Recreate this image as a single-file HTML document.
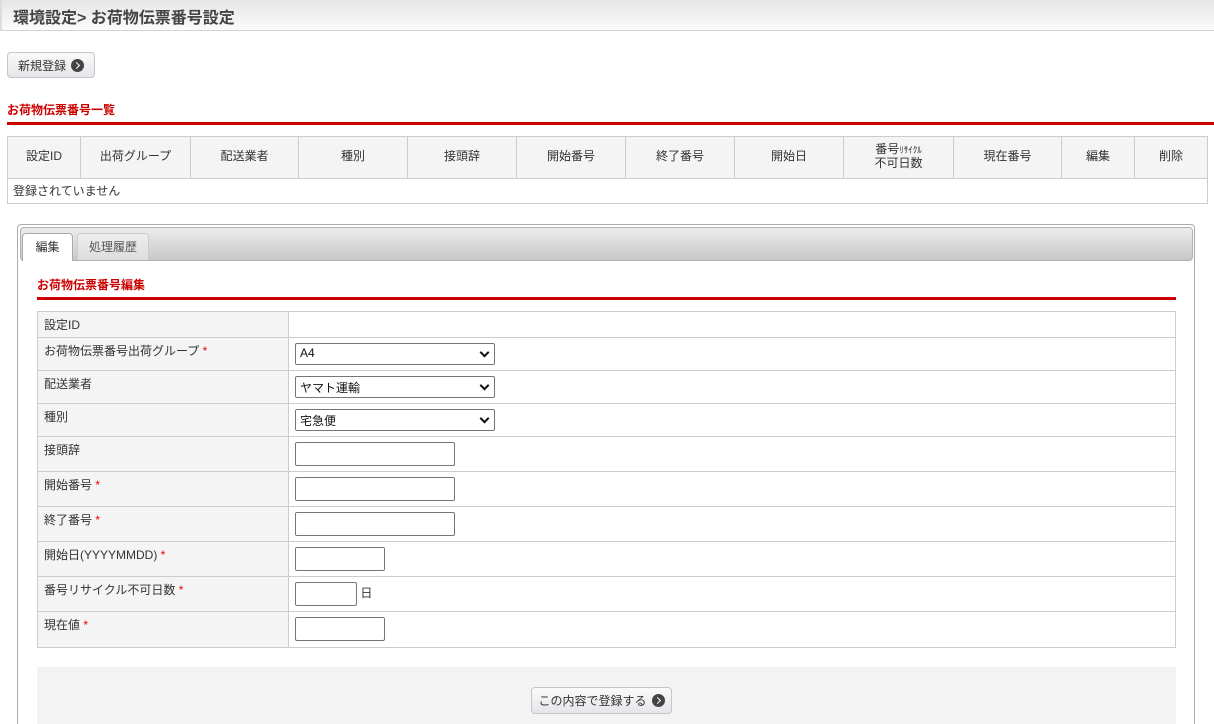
<!DOCTYPE html>
<html style="overflow:hidden;height:724px"><head><meta charset="utf-8">
<style>
*{box-sizing:border-box;margin:0;padding:0}
body{width:1214px;height:724px;overflow:hidden;background:#fff;font-family:"Liberation Sans","Noto Sans CJK JP",sans-serif;font-size:12px;color:#333;position:relative}
.a{position:absolute}
.hdr{left:0;top:0;width:1214px;height:31px;background:linear-gradient(#e6e6e6,#fbfbfb);border-bottom:1px solid #d4d0dc;border-left:2px solid #ddd}
.hdr span{position:absolute;left:11px;top:4px;font-size:16px;font-weight:bold;color:#444}
.btn{border:1px solid #c4c4cc;border-radius:4px;background:linear-gradient(#fafafa,#e6e6ea);font-size:12px;color:#333;display:flex;align-items:center;justify-content:center;gap:5px}
.ic{width:13px;height:13px;border-radius:50%;background:#444;display:inline-block;position:relative}
.ic:after{content:"";position:absolute;left:3px;top:4px;width:4px;height:4px;border-top:1.5px solid #fff;border-right:1.5px solid #fff;transform:rotate(45deg)}
.h2{color:#c00;font-weight:bold;font-size:12px}
.rl{height:3px;background:#c00}
table{border-collapse:collapse;position:absolute}
td,th{border:1px solid #ccc;font-weight:normal}
.lt th{background:#f3f4f3;text-align:center;font-size:12px;line-height:13px;padding-bottom:2px}
.ft td{vertical-align:top;padding:4px 6px 0}
.ft td.l{background:#f3f4f3;width:251px}
.r{color:#e00}
.sel{width:200px;height:22px;border:1px solid #767676;border-radius:2px;background:#fff;position:relative;padding:2px 4px;font-size:12px;color:#111}
.sel:after{content:"";position:absolute;right:6px;top:5px;width:5px;height:5px;border-right:2px solid #111;border-bottom:2px solid #111;transform:rotate(45deg)}
.in{height:24px;border:1px solid #767676;border-radius:2px;background:#fff;display:inline-block;vertical-align:middle}
</style></head><body>
<div class="a hdr"><span>環境設定&gt; お荷物伝票番号設定</span></div>
<div class="a btn" style="left:7px;top:52px;width:88px;height:26px">新規登録<i class="ic"></i></div>
<div class="a h2" style="left:7px;top:101px">お荷物伝票番号一覧</div>
<div class="a rl" style="left:7px;top:122px;width:1207px"></div>
<table class="lt" style="left:7px;top:136px;width:1201px">
<tr style="height:42px"><th style="width:73px">設定ID</th><th style="width:110px">出荷グループ</th><th style="width:108px">配送業者</th><th style="width:109px">種別</th><th style="width:109px">接頭辞</th><th style="width:109px">開始番号</th><th style="width:109px">終了番号</th><th style="width:109px">開始日</th><th style="width:110px">番号<span style="font-size:9px">ﾘｻｲｸﾙ</span><br>不可日数</th><th style="width:108px">現在番号</th><th style="width:73px">編集</th><th>削除</th></tr>
<tr style="height:25px"><td colspan="12" style="padding-left:5px;padding-bottom:2px">登録されていません</td></tr>
</table>
<div class="a" style="left:17px;top:224px;width:1178px;height:520px;border:1px solid #aaa;border-radius:4px"></div>
<div class="a" style="left:20px;top:227px;width:1173px;height:34px;background:linear-gradient(#ececec,#c8c8c8);border:1px solid #b0b0b0;border-radius:4px"></div>
<div class="a" style="left:22px;top:233px;width:51px;height:28px;background:#fff;border:1px solid #aaa;border-bottom:none;border-radius:4px 4px 0 0;text-align:center;line-height:26px;color:#333">編集</div>
<div class="a" style="left:77px;top:233px;width:72px;height:27px;background:linear-gradient(#eee,#ddd);border:1px solid #ccc;border-bottom:none;border-radius:4px 4px 0 0;text-align:center;line-height:26px;color:#555">処理履歴</div>
<div class="a h2" style="left:37px;top:276px">お荷物伝票番号編集</div>
<div class="a rl" style="left:37px;top:297px;width:1139px"></div>
<table class="ft" style="left:37px;top:311px;width:1139px">
<tr style="height:26px"><td class="l">設定ID</td><td></td></tr>
<tr style="height:33px"><td class="l">お荷物伝票番号出荷グループ <span class="r">*</span></td><td style="padding-top:5px"><div class="sel">A4</div></td></tr>
<tr style="height:33px"><td class="l">配送業者</td><td style="padding-top:5px"><div class="sel">ヤマト運輸</div></td></tr>
<tr style="height:33px"><td class="l">種別</td><td style="padding-top:5px"><div class="sel">宅急便</div></td></tr>
<tr style="height:35px"><td class="l">接頭辞</td><td style="padding-top:5px"><span class="in" style="width:160px"></span></td></tr>
<tr style="height:35px"><td class="l">開始番号 <span class="r">*</span></td><td style="padding-top:5px"><span class="in" style="width:160px"></span></td></tr>
<tr style="height:35px"><td class="l">終了番号 <span class="r">*</span></td><td style="padding-top:5px"><span class="in" style="width:160px"></span></td></tr>
<tr style="height:35px"><td class="l">開始日(YYYYMMDD) <span class="r">*</span></td><td style="padding-top:5px"><span class="in" style="width:90px"></span></td></tr>
<tr style="height:35px"><td class="l">番号リサイクル不可日数 <span class="r">*</span></td><td style="padding-top:5px"><span class="in" style="width:62px"></span> 日</td></tr>
<tr style="height:36px"><td class="l">現在値 <span class="r">*</span></td><td style="padding-top:5px"><span class="in" style="width:90px"></span></td></tr>
</table>
<div class="a" style="left:37px;top:667px;width:1139px;height:57px;background:#f3f3f3"></div>
<div class="a btn" style="left:531px;top:687px;width:141px;height:27px">この内容で登録する<i class="ic"></i></div>
</body></html>
